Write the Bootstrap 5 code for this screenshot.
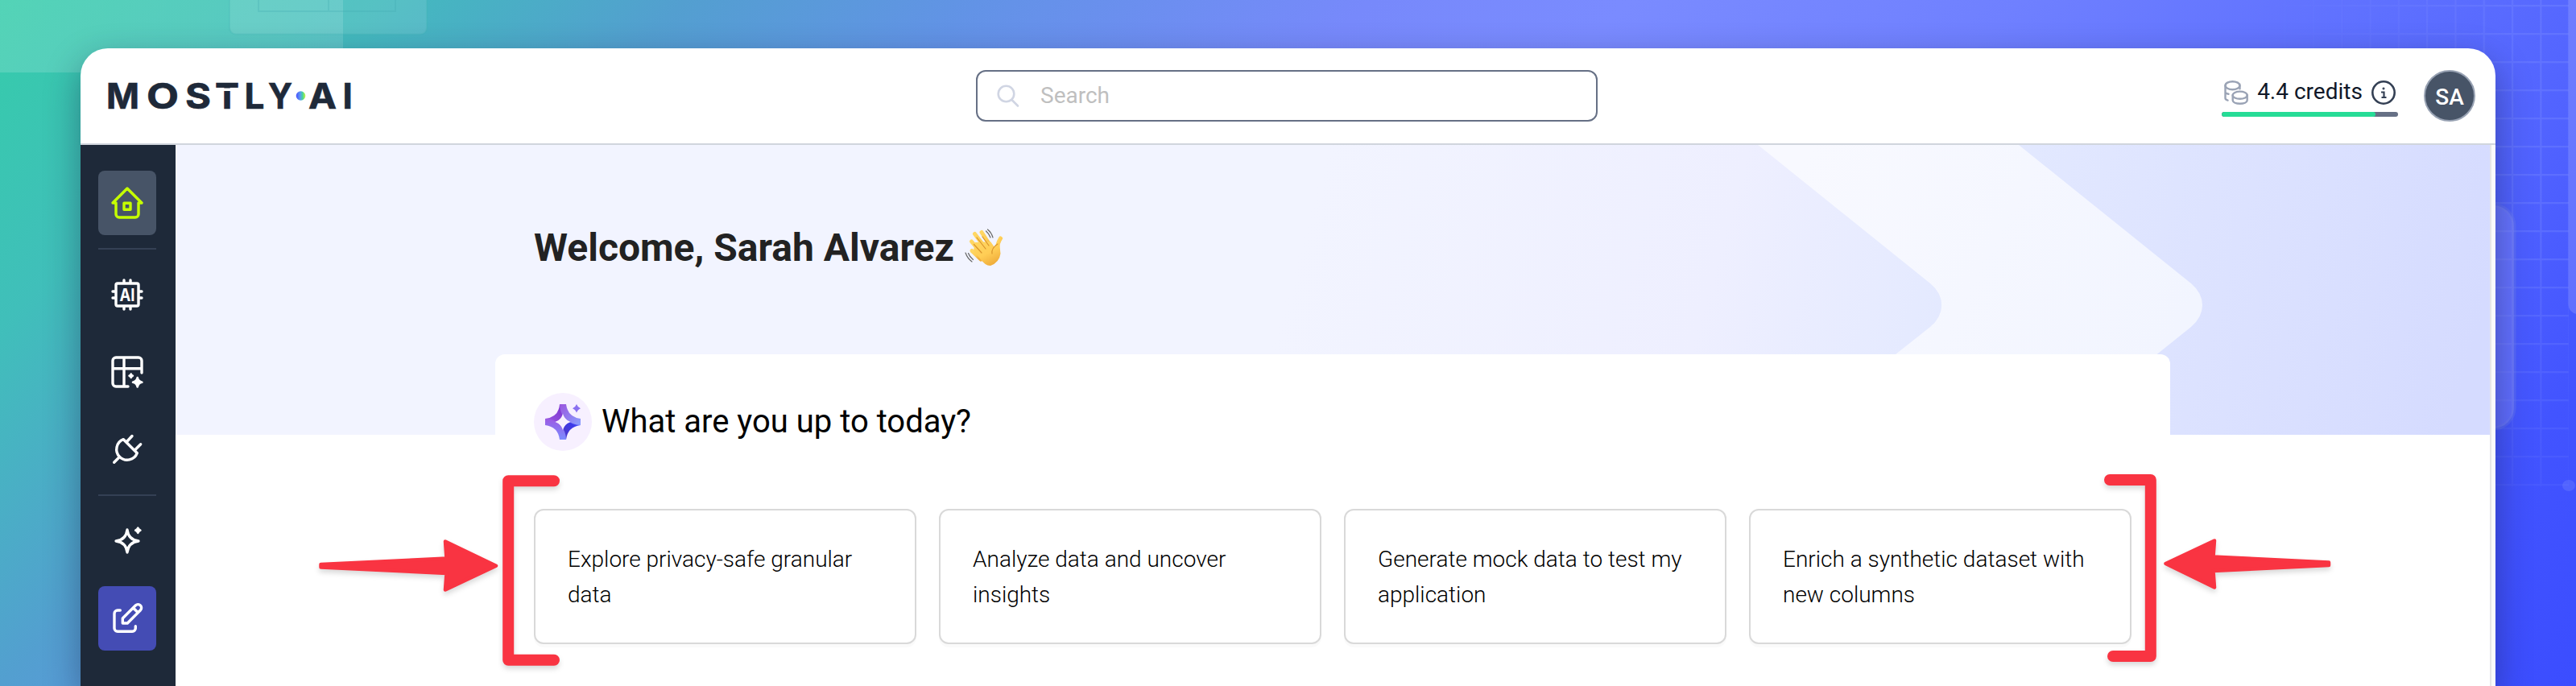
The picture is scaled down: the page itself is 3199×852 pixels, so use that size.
<!DOCTYPE html>
<html lang="en">
<head>
<meta charset="utf-8">
<meta name="viewport" content="width=device-width, initial-scale=1">
<title>MOSTLY AI</title>
<link href="https://cdn.jsdelivr.net/npm/bootstrap@5.3.0/dist/css/bootstrap.min.css" rel="stylesheet">
<style>
html,body{height:100%}
body{font-family:Roboto,"Liberation Sans",sans-serif;font-size:28px;line-height:44px;color:#000;overflow:hidden;
  background:linear-gradient(135deg,#35ccaa 0%,#40bfba 10%,#539fd0 21%,#6293e6 30%,#7789fb 42%,#7a8bff 50%,#6f80ff 62%,#5d6fff 74%,#5163ff 82%,#4254ff 91%,#3b4dff 100%)}
.backdrop{position:absolute;inset:0;width:100%;height:100%}
.stage{padding:60px 100px 0;height:852px;position:relative}
.window{background:#fff;border-radius:34px 34px 0 0;overflow:hidden;height:792px}
.window-shade{border-radius:34px 34px 0 0;box-shadow:0 16px 44px rgba(20,25,60,.4)}
.topbar{height:120px;border-bottom:2px solid #d0d5dd;padding:0 25px 0 34px;display:grid;grid-template-columns:1078px 772px 1fr;align-items:center}
.brand{overflow:visible}
.searchbox{height:64px;border:2px solid #667085;border-radius:12px;padding:0 24px;color:#bfbfbf;gap:25px;line-height:60px}
.credit-box{width:219px;margin-right:32px;margin-top:4px}
.credit-line{height:36px;padding:0 3px;color:#101828}
.credit-line span{padding-bottom:2px}
.credit-meter{height:6px;border-radius:3px;background:#667085;margin-top:6px}
.credit-meter .progress-bar{background:#26dc96;border-radius:3px}
.avatar{width:64px;height:64px;background:#475467;border:2px solid #98a2b3;color:#fff;padding-top:3px;font-weight:500}
.side{width:118px;background:#1e2939;padding:32px 24px 0 22px;gap:16px;flex:none}
.side-btn{width:72px;height:80px;border-radius:8px}
.side-btn svg{width:48px;height:48px;fill:none;stroke:#fff;stroke-width:3.4;stroke-linecap:round;stroke-linejoin:round}
.side-btn.on{background:#475467}
.side-btn.on svg{stroke:#c6ff00}
.side-btn.edit{background:#444cb4}
.side-rule{height:2px;width:72px;background:#344054}
.workspace{border-right:2px solid #e6e6e8;min-width:0}
.rail{width:5px;background:#fafafa;flex:none}
.hero{height:360px;position:relative;background:#f2f4ff}
.hero-art{position:absolute;inset:0;width:100%;height:100%}
.welcome{position:relative;width:1984px;margin:0 auto;padding-top:96px}
.welcome h1{font-size:48px;font-weight:700;line-height:64px;color:#222;gap:12px}
.panel{position:relative;width:2080px;margin:-100px auto 0;background:#fff;border-radius:12px 12px 0 0;padding:48px;height:412px}
.panel h2{font-size:40px;font-weight:450;line-height:72px}
.spark{width:72px;height:72px}
.prompts{display:grid;grid-template-columns:repeat(4,475px);gap:28px;margin-top:72px}
.prompt{height:168px;border:2px solid #d9d9d9;border-radius:12px;padding:39px 36px 0 40px;background:#fff;box-shadow:0 4px 0 rgba(0,0,0,.02);font-weight:300}
.marks{position:absolute;inset:0;width:3199px;height:852px;filter:drop-shadow(0 4px 3px rgba(0,0,0,.15));pointer-events:none}
</style>
</head>
<body>
<svg class="backdrop" viewBox="0 0 3199 852" preserveAspectRatio="none">
  <defs>
    <pattern id="grid" width="35.3" height="35" patternUnits="userSpaceOnUse" x="3119" y="41"><path d="M0 1H35.3M1 0V35" stroke="#8fa0ff" stroke-opacity=".23" stroke-width="2.4"/></pattern>
    <linearGradient id="gf" x1="0" y1="0" x2="1" y2="0"><stop offset="0" stop-color="#fff" stop-opacity="0"/><stop offset=".9" stop-color="#fff"/></linearGradient>
    <linearGradient id="gv" x1="0" y1="0" x2="0" y2="1"><stop offset=".5" stop-color="#000" stop-opacity="0"/><stop offset="1" stop-color="#000" stop-opacity=".6"/></linearGradient>
    <mask id="gm"><rect x="2800" y="0" width="399" height="604" fill="url(#gf)"/><rect x="2800" y="0" width="399" height="604" fill="url(#gv)"/></mask>
    <linearGradient id="tl"><stop offset="0" stop-color="#fff" stop-opacity=".15"/><stop offset="1" stop-color="#fff" stop-opacity=".13"/></linearGradient>
  </defs>
  <rect width="426" height="90" fill="url(#tl)"/>
  <rect x="285" y="-20" width="245" height="62.500" rx="8" fill="#fff" fill-opacity=".1" stroke="#3fb3b4" stroke-opacity=".25" stroke-width="2"/>
  <path d="M321 0V14H491V0M408 0V14" fill="none" stroke="#3fa8b0" stroke-opacity=".25" stroke-width="2"/>
  <rect x="2800" width="390" height="604" fill="url(#grid)" mask="url(#gm)"/>
  <rect x="3040" y="255" width="82" height="277" rx="26" fill="#8f95ff" fill-opacity=".36" stroke="#7080f0" stroke-opacity=".3" stroke-width="5"/>
  <rect x="3189.500" y="-20" width="40" height="410" rx="12" fill="#fff" fill-opacity=".15"/>
  <ellipse cx="3190" cy="603" rx="8" ry="7" fill="#7384ff" fill-opacity=".35"/>
</svg>
<div class="stage">
<div class="window-shade"><div class="window d-flex flex-column">
  <header class="topbar">
    <svg class="brand" width="312" height="80" viewBox="134 79 312 80" role="img" aria-label="MOSTLY AI">
      <defs><linearGradient id="dot"><stop offset="0" stop-color="#4b4fff"/><stop offset=".45" stop-color="#5c9cf0"/><stop offset=".7" stop-color="#43d69a"/><stop offset="1" stop-color="#c9f53a"/></linearGradient></defs>
      <g font-family="Inter,sans-serif" font-weight="700" font-size="44" fill="#1e2939" stroke="#1e2939" stroke-width=".7">
        <text y="135" x="132">M</text>
        <text y="135" x="182" textLength="40" lengthAdjust="spacingAndGlyphs">O</text>
        <text y="135" x="230" textLength="32" lengthAdjust="spacingAndGlyphs">S</text>
        <text y="135" x="267" textLength="30" lengthAdjust="spacingAndGlyphs">T</text>
        <text y="135" x="303.500">L</text>
        <text y="135" x="333" textLength="30" lengthAdjust="spacingAndGlyphs">Y</text>
        <text y="135" x="383" textLength="35" lengthAdjust="spacingAndGlyphs">A</text>
        <text y="135" x="425.500">I</text>
      </g>
      <rect x="266" y="109.500" width="32" height="3.500" fill="#fff"/>
      <circle cx="373.500" cy="119" r="5.800" fill="url(#dot)"/>
    </svg>
    <div class="searchbox d-flex align-items-center">
      <svg width="29" height="30" viewBox="0 0 29 30" fill="none" stroke="#d0d5e3" stroke-width="2.600" stroke-linecap="round"><circle cx="11.500" cy="12.500" r="9.800"/><path d="M18.500 20L26 27.500"/></svg>
      <span>Search</span>
    </div>
    <div class="d-flex align-items-center justify-content-end">
      <div class="credit-box">
        <div class="credit-line d-flex align-items-center">
          <svg width="30" height="30" viewBox="0 0 30 30" fill="none" stroke="#9aa3b5" stroke-width="2.400" stroke-linecap="round"><ellipse cx="10.500" cy="6.200" rx="9" ry="5"/><path d="M1.500 6.200V22c0 1.300 1 2 3 2.600M1.500 14.500c.3 1.200 1.500 1.800 4 2.200M19.500 6.200v4"/><ellipse cx="19.700" cy="18.200" rx="9" ry="4.600"/><path d="M10.700 18.200v6c0 6 18 6 18 0v-6"/></svg>
          <span class="ms-auto">4.4 credits</span>
          <svg class="ms-auto" width="30" height="30" viewBox="0 0 30 30" fill="none" stroke="#344054" stroke-width="2.600"><circle cx="15" cy="15" r="13.700"/><path d="M12 14.500h3.500v6.500M12.500 21h6" stroke-width="2.200"/><circle cx="15" cy="10" r="1.100" fill="#344054" stroke-width="1"/></svg>
        </div>
        <div class="progress credit-meter"><div class="progress-bar" style="width:87.200%"></div></div>
      </div>
      <div class="avatar rounded-circle d-flex align-items-center justify-content-center">SA</div>
    </div>
  </header>
  <div class="d-flex flex-grow-1">
    <nav class="side d-flex flex-column">
      <a class="side-btn on d-flex align-items-center justify-content-center"><svg viewBox="0 0 48 48"><path d="M6 24L24 6l18 18h-4v14a4 4 0 0 1-4 4H14a4 4 0 0 1-4-4V24z"/><path d="M20 24.200h8v8h-8z"/></svg></a>
      <div class="side-rule"></div>
      <a class="side-btn d-flex align-items-center justify-content-center"><svg viewBox="0 0 48 48"><rect x="10" y="10" width="28" height="28" rx="2"/><path d="M20 6v3M28 6v3M20 39v3M28 39v3M6 20h3M6 28h3M39 20h3M39 28h3"/><text x="24" y="31.500" text-anchor="middle" textLength="19" lengthAdjust="spacingAndGlyphs" font-family="Inter,sans-serif" font-weight="700" font-size="21" fill="#fff" stroke="none">AI</text></svg></a>
      <a class="side-btn d-flex align-items-center justify-content-center"><svg viewBox="0 0 48 48"><path d="M42 25V10a4 4 0 0 0-4-4H10a4 4 0 0 0-4 4v28a4 4 0 0 0 4 4H25M20 6v36M6 19.700h36"/><path d="M36.700 31q1 4.700 5.700 5.700-4.700 1-5.700 5.700-1-4.700-5.700-5.700 4.700-1 5.700-5.700zM28.700 26.500q.5 1.700 2.200 2.200-1.700.5-2.200 2.200-.5-1.700-2.200-2.200 1.700-.5 2.200-2.200z" fill="#fff" stroke-width="2.600"/></svg></a>
      <a class="side-btn d-flex align-items-center justify-content-center"><svg viewBox="0 0 48 48"><path d="M19.300 11.700A13.200 13.200 0 1 0 36.300 28.700zM7.700 40.300l7-7M30 7.500L24 14M40.700 17.700l-7 7"/></svg></a>
      <div class="side-rule"></div>
      <a class="side-btn d-flex align-items-center justify-content-center"><svg viewBox="0 0 48 48"><path d="M24 10Q25.500 22.500 38 24 25.500 25.500 24 38 22.500 25.500 10 24 22.500 22.500 24 10z" stroke-width="3.300"/><path d="M37.300 7.500q1 2.200 3.200 3.200-2.200 1-3.200 3.200-1-2.200-3.200-3.200 2.200-1 3.200-3.200z" fill="#fff" stroke-width="2.400"/></svg></a>
      <a class="side-btn edit d-flex align-items-center justify-content-center"><svg viewBox="0 0 48 48"><path d="M15.300 14H12a4 4 0 0 0-4 4v18.300a4 4 0 0 0 4 4h18.300a4 4 0 0 0 4-4v-2.600M18.300 30v-6L34.500 7.700a4.250 4.250 0 0 1 6 6L24.300 30zM31.500 11l5.500 5.500"/></svg></a>
    </nav>
    <main class="workspace flex-grow-1">
      <section class="hero">
        <svg class="hero-art" viewBox="218 180 2874 360" preserveAspectRatio="none">
          <defs>
            <linearGradient id="h1" gradientUnits="userSpaceOnUse" x1="1650" y1="180" x2="2430" y2="400"><stop offset="0" stop-color="#f2f4ff"/><stop offset=".62" stop-color="#eeefff"/><stop offset="1" stop-color="#e3e9ff"/></linearGradient>
            <linearGradient id="h2" gradientUnits="userSpaceOnUse" x1="2480" y1="180" x2="3092" y2="360"><stop offset="0" stop-color="#e3e9ff"/><stop offset="1" stop-color="#d5dbff"/></linearGradient>
            <linearGradient id="h3" gradientUnits="userSpaceOnUse" x1="2250" y1="180" x2="2700" y2="420"><stop offset="0" stop-color="#f8f9ff"/><stop offset="1" stop-color="#f2f5ff"/></linearGradient>
          </defs>
          <path d="M2400 180H3092V540H2400z" fill="url(#h2)"/>
          <path d="M2183 180L2397 352Q2411 364 2411 379T2397 406L2230 540H2554L2721 406Q2735 394 2735 379T2721 352L2507 180z" fill="url(#h3)"/>
          <path d="M2183 180L2397 352Q2411 364 2411 379T2397 406L2354 440H1500V180z" fill="url(#h1)"/>
        </svg>
        <div class="welcome"><h1 class="d-flex align-items-center mb-0"><span>Welcome, Sarah Alvarez</span>
          <svg width="50" height="50" viewBox="0 0 50 50" role="img" aria-label="waving hand">
            <defs><linearGradient id="skin" x1="0" y1="0" x2=".6" y2="1"><stop offset="0" stop-color="#ffd764"/><stop offset=".6" stop-color="#ffcd55"/><stop offset="1" stop-color="#f0ae3c"/></linearGradient></defs>
            <g fill="none" stroke="url(#skin)" stroke-linecap="round"><path d="M22 5.500L34 24" stroke-width="5"/><path d="M13.500 7.500L29 28" stroke-width="5"/><path d="M9.500 17L24 34" stroke-width="5"/><path d="M10 28.500L21 39" stroke-width="5"/><path d="M45.500 13Q41 20 41.500 28" stroke-width="5"/></g>
            <path d="M14 18L33 17 38 24 44 16Q45 28 45.500 32 44 43 33 47 26 47 19 37L12 28z" fill="url(#skin)"/>
            <path d="M16 12L27 26M23 11L31 22M12.500 20.500L22 31M42 20Q34 25 35 32" stroke="#d9942c" stroke-width="1.200" fill="none" stroke-linecap="round"/>
            <path d="M29.500 2Q34 5.500 36 12M27.500 4Q31.500 7.500 33 12M2 31Q4.500 38 10 42M5.500 31.500Q7 36 11.500 39.500" stroke="#666" stroke-width="1.200" fill="none" stroke-linecap="round"/>
          </svg></h1></div>
      </section>
      <section class="panel">
        <div class="d-flex align-items-center">
          <svg class="spark" viewBox="0 0 72 72">
            <defs>
              <linearGradient id="s1" x1="0" y1="0" x2="1" y2="1"><stop offset="0" stop-color="#9a55dd"/><stop offset="1" stop-color="#8aa0ff"/></linearGradient>
              <linearGradient id="s2" x1="0" y1="0" x2="0" y2="1"><stop offset="0" stop-color="#9c5be3"/><stop offset="1" stop-color="#7b8cff"/></linearGradient>
              <linearGradient id="s3" x1="0" y1="1" x2="1" y2="0"><stop offset="0" stop-color="#9b5ce0"/><stop offset="1" stop-color="#7a2fd0"/></linearGradient>
              <linearGradient id="s4" x1="1" y1="0" x2="0" y2="1"><stop offset="0" stop-color="#5860ff"/><stop offset=".4" stop-color="#3c3ae8"/><stop offset="1" stop-color="#5238c0"/></linearGradient>
            </defs>
            <circle cx="36" cy="36" r="36" fill="#f7f0ff"/>
            <path d="M32 14Q31 30 14 32v8Q33 37 36 28L38 20z" fill="url(#s3)"/>
            <path d="M58 32v8Q42 42 40 58L36 50V44Q38 39 43.700 36z" fill="url(#s4)"/>
            <path d="M32 14h8Q42 30 58 32v8Q47 39.500 40 33 32 25 32 14z" fill="url(#s1)"/>
            <path d="M14 32Q25 32 32 39 40 47 40 58h-8Q30 42 14 40z" fill="url(#s2)"/>
            <path d="M36 28Q38 33.500 43.700 36 38 38.500 36 44 34 38.500 28.300 36 34 33.500 36 28z" fill="#f7f0ff" stroke="#f7f0ff" stroke-width="1.500"/>
            <path d="M53 14q1.300 3.800 5 5.200-3.700 1.500-5 5.300-1.300-3.800-5-5.300 3.700-1.400 5-5.200z" fill="#8a70f0"/>
          </svg>
          <h2 class="mb-0 ms-2 ps-1">What are you up to today?</h2>
        </div>
        <div class="prompts">
          <div class="prompt">Explore privacy-safe granular data</div>
          <div class="prompt">Analyze data and uncover insights</div>
          <div class="prompt">Generate mock data to test my application</div>
          <div class="prompt">Enrich a synthetic dataset with new columns</div>
        </div>
      </section>
    </main>
    <div class="rail"></div>
  </div>
</div></div>
<svg class="marks" viewBox="0 0 3199 852" fill="#f93442" stroke="#f93442" stroke-linecap="round" stroke-linejoin="round">
  <path d="M688 597.300H631.200V819.700H688M2620 596H2670.800V815H2624" fill="none" stroke-width="14"/>
  <path d="M398.500 701L554.500 693.500 553 672.500 616 702.700 553 732.500 554.500 712 398.500 704.500zM2892 698.500L2748.500 691.500 2750 671.500 2689.500 700 2750 729.500 2748.500 709 2892 702z" stroke-width="4.500"/>
</svg>
</div>
<script src="https://cdn.jsdelivr.net/npm/bootstrap@5.3.0/dist/js/bootstrap.bundle.min.js"></script>
</body>
</html>
